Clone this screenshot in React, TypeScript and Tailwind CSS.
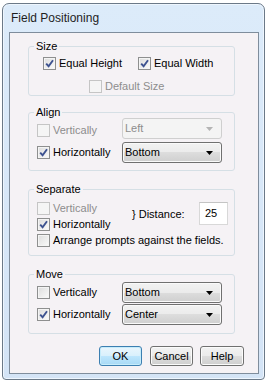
import React from 'react';

const font = { fontFamily: '"Liberation Sans", Arial, sans-serif' };

const Check = ({ checked, disabled }: { checked?: boolean; disabled?: boolean }) => (
  <span
    className={
      'relative inline-flex h-[13px] w-[13px] shrink-0 items-center justify-center border ' +
      (disabled
        ? 'border-[#c5c5c5] bg-[#f5f5f5]'
        : 'border-[#8e8f8f] bg-gradient-to-br from-[#dcdcdc] to-[#fbfbfb] shadow-[inset_0_0_0_1px_#f4f4f4]')
    }
  >
    {checked && (
      <svg width="9" height="9" viewBox="0 0 9 9">
        <path d="M1.2 4.6 L3.6 7.2 L8 1.2" fill="none" stroke="#3d5290" strokeWidth="1.9" />
      </svg>
    )}
  </span>
);

const CheckRow = ({
  label,
  checked,
  disabled,
  className = '',
}: {
  label: string;
  checked?: boolean;
  disabled?: boolean;
  className?: string;
}) => (
  <div className={'flex h-[13px] items-center ' + className}>
    <Check checked={checked} disabled={disabled} />
    <span className={'ml-[3px] whitespace-nowrap leading-[13px] ' + (disabled ? 'text-[#8d8d8d]' : 'text-black')}>
      {label}
    </span>
  </div>
);

const Combo = ({ value, disabled }: { value: string; disabled?: boolean }) => (
  <div
    className={
      'flex h-[21px] w-[100px] items-center justify-between rounded-[3px] border pl-[2px] pr-[8px] ' +
      (disabled
        ? 'border-[#cfcfcf] bg-[#f4f4f4] text-[#8d8d8d]'
        : 'border-[#707070] bg-[linear-gradient(#f2f2f2_0%,#ebebeb_50%,#dddddd_50%,#cfcfcf_100%)] text-black shadow-[inset_0_0_0_1px_#fafafa]')
    }
  >
    <span className="leading-[13px]">{value}</span>
    <svg width="7" height="4" viewBox="0 0 7 4">
      <path d="M0 0 H7 L3.5 4 Z" fill={disabled ? '#b4b4b4' : '#000'} />
    </svg>
  </div>
);

const Group = ({
  title,
  className,
  children,
}: {
  title: string;
  className: string;
  children: React.ReactNode;
}) => (
  <div className={'relative w-[207px] rounded-[3px] border border-[#d5dfe5] ' + className}>
    <span className="absolute left-[5px] top-[-8px] bg-[#f5f2f5] px-[2px] leading-[14px] text-black">{title}</span>
    {children}
  </div>
);

const Button = ({ label, primary, className = '' }: { label: string; primary?: boolean; className?: string }) => (
  <div
    className={
      'flex h-[20px] items-center justify-center rounded-[3px] border text-black ' +
      (primary
        ? 'border-[#3c7fb1] bg-[linear-gradient(#eaf6fd_0%,#d9f0fc_50%,#bee6fd_50%,#a7d9f5_100%)] shadow-[inset_0_0_0_1px_#c6ecfb]'
        : 'border-[#707070] bg-[linear-gradient(#f2f2f2_0%,#ebebeb_50%,#dddddd_50%,#cfcfcf_100%)] shadow-[inset_0_0_0_1px_#fbfbfb]') +
      ' ' +
      className
    }
  >
    <span className="leading-[13px]">{label}</span>
  </div>
);

export default function App() {
  return (
    <div className="h-[385px] w-[268px] bg-white pl-[2px] pt-[3px] text-[11px]" style={font}>
      <div className="flex h-[377px] w-[263px] flex-col rounded-t-[7px] rounded-b-[4px] border border-[#6b7988] bg-gradient-to-b from-[#dcebfa] to-[#d4e4f6] pb-[5px] pl-[6px] pr-[5px] shadow-[inset_0_0_0_1px_#eef6fe]">
        <div className="flex h-[28px] items-center pl-[2px] pb-[1px] text-[12px] text-[#1e1e1e]">Field Positioning</div>
        <div className="flex h-[342px] w-[250px] flex-col border border-[#7f8d9c] bg-[#f5f2f5] pl-[18px]">
          {/* Size */}
          <Group title="Size" className="mt-[13px] h-[50px] pl-[14px] pt-[10px]">
            <div className="flex">
              <CheckRow label="Equal Height" checked className="w-[95px]" />
              <CheckRow label="Equal Width" checked />
            </div>
            <CheckRow label="Default Size" disabled className="ml-[46px] mt-[10px]" />
          </Group>

          {/* Align */}
          <Group title="Align" className="mt-[16px] h-[59px] pl-[8px] pt-[5px]">
            <div className="flex flex-col gap-[3px]">
              <div className="flex items-center">
                <CheckRow label="Vertically" disabled className="mt-[3px] w-[85px]" />
                <Combo value="Left" disabled />
              </div>
              <div className="flex items-center">
                <CheckRow label="Horizontally" checked className="w-[85px]" />
                <Combo value="Bottom" />
              </div>
            </div>
          </Group>

          {/* Separate */}
          <Group title="Separate" className="mt-[18px] h-[67px] pl-[8px] pt-[12px]">
            <div className="flex flex-col gap-[3px]">
              <div className="flex items-start">
                <div className="flex w-[95px] flex-col gap-[3px]">
                  <CheckRow label="Vertically" disabled />
                  <CheckRow label="Horizontally" checked />
                </div>
                <span className="mt-[5px] w-[67px] leading-[14px] text-black">{'} Distance:'}</span>
                <div className="flex h-[23px] w-[29px] items-center border border-[#d8d8d8] border-t-[#c4c4c4] bg-white pl-[5px] text-black">
                  25
                </div>
              </div>
              <CheckRow label="Arrange prompts against the fields." />
            </div>
          </Group>

          {/* Move */}
          <Group title="Move" className="mt-[18px] h-[60px] pl-[8px] pt-[7px]">
            <div className="flex flex-col gap-[1px]">
              <div className="flex items-center">
                <CheckRow label="Vertically" className="w-[85px]" />
                <Combo value="Bottom" />
              </div>
              <div className="flex items-center">
                <CheckRow label="Horizontally" checked className="w-[85px]" />
                <Combo value="Center" />
              </div>
            </div>
          </Group>

          <div className="ml-[71px] mt-[12px] flex">
            <Button label="OK" primary className="w-[43px]" />
            <Button label="Cancel" className="ml-[8px] w-[43px]" />
            <Button label="Help" className="ml-[7px] w-[44px]" />
          </div>
        </div>
      </div>
    </div>
  );
}
